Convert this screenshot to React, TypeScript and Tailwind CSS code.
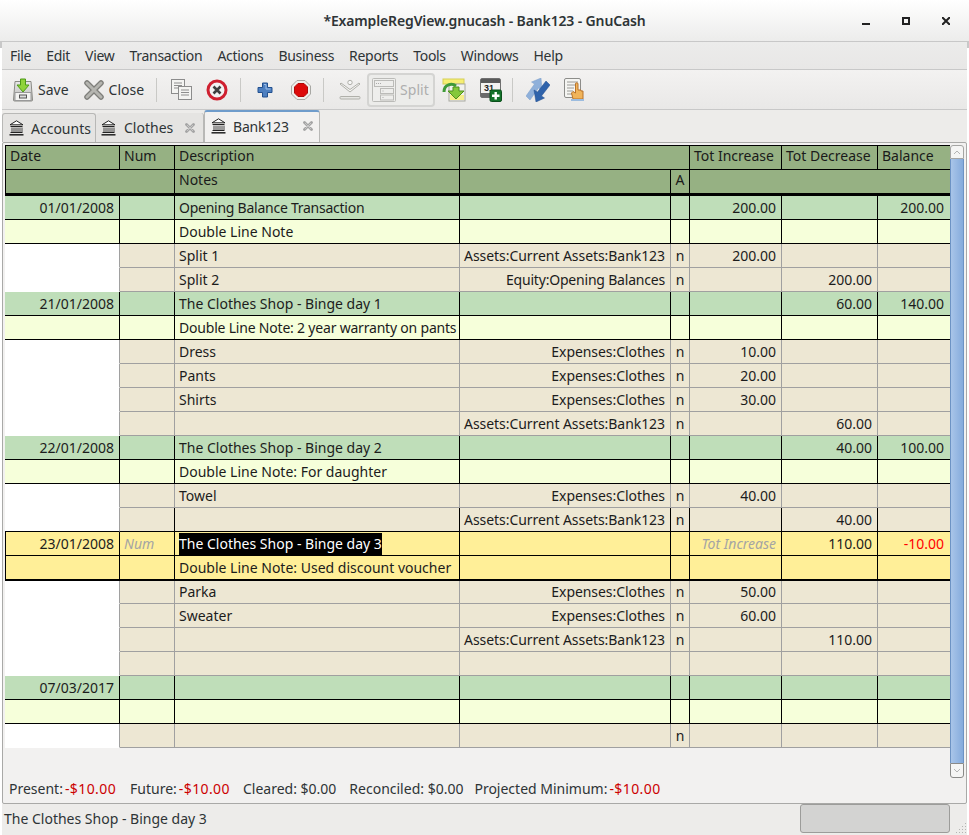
import type { ReactNode } from "react";

const COLS = "grid grid-cols-[115px_55px_285px_211px_19px_92px_96px_72px]";
const FONT = "font-['Noto_Sans',sans-serif]";

type RowData = {
  kind: "txn" | "note" | "split";
  date?: string;
  desc?: string;
  account?: string;
  rec?: string;
  inc?: string;
  dec?: string;
  bal?: string;
  active?: boolean;
  afterActive?: boolean;
  neg?: boolean;
  tight?: string;
};

const rows: RowData[] = [
  { kind: "txn", date: "01/01/2008", desc: "Opening Balance Transaction", inc: "200.00", bal: "200.00", tight: "tracking-[-0.25px]" },
  { kind: "note", desc: "Double Line Note" },
  { kind: "split", desc: "Split 1", account: "Assets:Current Assets:Bank123", rec: "n", inc: "200.00" },
  { kind: "split", desc: "Split 2", account: "Equity:Opening Balances", rec: "n", dec: "200.00" },
  { kind: "txn", date: "21/01/2008", desc: "The Clothes Shop - Binge day 1", dec: "60.00", bal: "140.00" },
  { kind: "note", desc: "Double Line Note: 2 year warranty on pants", tight: "tracking-[-0.2px]" },
  { kind: "split", desc: "Dress", account: "Expenses:Clothes", rec: "n", inc: "10.00" },
  { kind: "split", desc: "Pants", account: "Expenses:Clothes", rec: "n", inc: "20.00" },
  { kind: "split", desc: "Shirts", account: "Expenses:Clothes", rec: "n", inc: "30.00" },
  { kind: "split", account: "Assets:Current Assets:Bank123", rec: "n", dec: "60.00" },
  { kind: "txn", date: "22/01/2008", desc: "The Clothes Shop - Binge day 2", dec: "40.00", bal: "100.00" },
  { kind: "note", desc: "Double Line Note: For daughter" },
  { kind: "split", desc: "Towel", account: "Expenses:Clothes", rec: "n", inc: "40.00" },
  { kind: "split", account: "Assets:Current Assets:Bank123", rec: "n", dec: "40.00" },
  { kind: "txn", active: true, date: "23/01/2008", desc: "The Clothes Shop - Binge day 3", dec: "110.00", bal: "-10.00", neg: true },
  { kind: "note", active: true, desc: "Double Line Note: Used discount voucher" },
  { kind: "split", afterActive: true, desc: "Parka", account: "Expenses:Clothes", rec: "n", inc: "50.00" },
  { kind: "split", desc: "Sweater", account: "Expenses:Clothes", rec: "n", inc: "60.00" },
  { kind: "split", account: "Assets:Current Assets:Bank123", rec: "n", dec: "110.00" },
  { kind: "split" },
  { kind: "txn", date: "07/03/2017" },
  { kind: "note" },
  { kind: "split", rec: "n" },
];

const Cell = ({
  className,
  leading = "leading-[23px]",
  children,
}: {
  className?: string;
  leading?: string;
  children?: ReactNode;
}) => (
  <div className={`overflow-hidden whitespace-nowrap border-r ${leading} ${className ?? ""}`}>
    {children}
  </div>
);

const RegisterRow = ({ row, nextBlack }: { row: RowData; nextBlack: boolean }) => {
  const isSplit = row.kind === "split";
  const bg = row.active
    ? "bg-[#ffef98]"
    : row.kind === "txn"
      ? "bg-[#bfdeb9]"
      : row.kind === "note"
        ? "bg-[#f6ffda]"
        : "bg-[#ede7d3]";
  const line = isSplit && !nextBlack ? "border-[#a0a0a0]" : "border-black";
  const bottom = row.active && row.kind === "note" ? "border-b-2" : "border-b";
  const base = `${bg} ${line} ${bottom}`;
  const height =
    row.active && row.kind === "note"
      ? "h-[25px]"
      : row.afterActive
        ? "h-[23px]"
        : "h-[24px]";
  const leading = row.afterActive ? "leading-[21px]" : "leading-[23px]";

  return (
    <div className={`${COLS} ${height}`}>
      {isSplit ? (
        <Cell className={`bg-white border-[#a0a0a0] border-b ${nextBlack ? "border-b-black" : "border-b-white"}`} />
      ) : (
        <Cell className={`${base} pr-[5px] text-right ${row.active ? "border-l border-l-black" : ""}`}>{row.date}</Cell>
      )}
      <Cell className={`${base} pl-[4px]`}>
        {row.active && row.kind === "txn" && <span className="italic text-[#a4a4a4]">Num</span>}
      </Cell>
      <Cell leading={leading} className={`${base} pl-[4px] ${row.tight ?? ""}`}>
        {row.active && row.kind === "txn" ? (
          <span className="inline-block h-[22px] bg-black leading-[22px] text-white">{row.desc}</span>
        ) : (
          row.desc
        )}
      </Cell>
      <Cell leading={leading} className={`${base} pr-[5px] text-right ${row.desc === "Split 2" ? "tracking-[-0.2px]" : "tracking-[-0.06px]"}`}>{row.account}</Cell>
      <Cell leading={leading} className={`${base} text-center`}>{row.rec}</Cell>
      <Cell leading={leading} className={`${base} pr-[5px] text-right`}>
        {row.active && row.kind === "txn" ? <span className="italic text-[#a4a4a4]">Tot Increase</span> : row.inc}
      </Cell>
      <Cell leading={leading} className={`${base} pr-[5px] text-right`}>{row.dec}</Cell>
      <Cell leading={leading} className={`${base} border-r-0 pr-[6px] text-right ${row.neg ? "text-[#ff0000]" : ""}`}>{row.bal}</Cell>
    </div>
  );
};

const BankIcon = () => (
  <svg width="15" height="16" viewBox="0 0 15 16" fill="none" stroke="#222" strokeWidth="1">
    <path d="M7.500 .8 L14 4.800 H1 Z" fill="#fff" />
    <path d="M1.500 6.500h12" />
    <path d="M3 7.500v4.500M5 7.500v4.500M7 7.500v4.500M9 7.500v4.500M11 7.500v4.500M13 7.500v4.500" stroke="#444" />
    <path d="M1.500 12.500h12" />
    <path d="M.5 14.800h14" strokeWidth="1.500" />
  </svg>
);

const TabClose = () => (
  <svg width="10" height="10" viewBox="0 0 10 10">
    <path d="M1.500 1.500l7 7M8.500 1.500l-7 7" stroke="#a4a4a4" strokeWidth="2.800" strokeLinecap="round" />
    <path d="M2 2l6 6M8 2l-6 6" stroke="#cfcfcf" strokeWidth=".8" />
  </svg>
);

const SaveIcon = () => (
  <svg width="20" height="24" viewBox="0 0 20 24">
    <defs>
      <linearGradient id="cab" x1="0" x2="0" y1="0" y2="1">
        <stop offset="0" stopColor="#e8e8e8" />
        <stop offset="1" stopColor="#b9b9b6" />
      </linearGradient>
    </defs>
    <path d="M2 3.500h16l1.500 18.500a1 1 0 0 1-1 1H1.500a1 1 0 0 1-1-1Z" fill="url(#cab)" stroke="#8a8a85" />
    <rect x="2" y="14.500" width="16" height="8" fill="#f4f4f2" stroke="#999" />
    <rect x="6.500" y="17" width="7" height="3" fill="#ddd" stroke="#555" />
    <path d="M7.500 1h5v6h3.500l-6 7-6-7h3.500Z" fill="#8fd33a" stroke="#4d9a17" />
  </svg>
);

const CloseIcon = () => (
  <svg width="20" height="20" viewBox="0 0 20 20">
    <path d="M3 3l14 14M17 3L3 17" stroke="#7e7e7a" strokeWidth="5.500" strokeLinecap="round" />
    <path d="M3 3l14 14M17 3L3 17" stroke="#b5b5b0" strokeWidth="3" strokeLinecap="round" />
  </svg>
);

const DupIcon = () => (
  <svg width="21" height="21" viewBox="0 0 21 21" fill="#f4f4f2" stroke="#8c8c8c">
    <rect x="0.500" y="0.500" width="13" height="14" />
    <rect x="7.500" y="7.500" width="13" height="13" />
    <path d="M3 4h8M3 6.500h8M3 9h4M10 11h8M10 13.500h8M10 16h8" stroke="#8e8e8e" />
  </svg>
);

const DeleteIcon = () => (
  <svg width="22" height="22" viewBox="0 0 22 22">
    <circle cx="11" cy="11" r="9" fill="#f2f2f2" stroke="#cf2030" strokeWidth="3" />
    <path d="M7.500 7.500l7 7M14.500 7.500l-7 7" stroke="#3f3f3f" strokeWidth="2.600" />
  </svg>
);

const PlusIcon = () => (
  <svg width="16" height="16" viewBox="0 0 16 16">
    <path d="M5.500 1h5v4.500H15v5h-4.500V15h-5v-4.500H1v-5h4.500Z" fill="#4d7fc0" stroke="#22508f" />
    <path d="M7 2.500h2v4.500h4.500" fill="none" stroke="#9dbfe8" />
  </svg>
);

const RecordIcon = () => (
  <svg width="20" height="20" viewBox="0 0 20 20">
    <path d="M6 .5h8L19.500 6v8L14 19.500H6L.5 14V6Z" fill="#f0efec" stroke="#a8a8a4" />
    <path d="M7 3.500h6L16.500 7v6L13 16.500H7L3.500 13V7Z" fill="#dd0a0a" stroke="#b00808" />
  </svg>
);

const BlankIcon = () => (
  <svg width="22" height="22" viewBox="0 0 22 22" fill="none" stroke="#b0b0aa">
    <circle cx="11" cy="3.500" r="2.200" fill="#f6f6f6" />
    <path d="M1 5l10 8 10-8-1-1-9 6.500L2 4Z" fill="#f4f4f2" />
    <rect x="1" y="17.500" width="20" height="2.500" rx="1" fill="#e6e6e3" />
  </svg>
);

const SplitIcon = () => (
  <svg width="24" height="24" viewBox="0 0 24 24" fill="#eeeeec" stroke="#bbbbb8">
    <rect x="0.500" y="0.500" width="23" height="23" rx="1" />
    <rect x="2.500" y="2.500" width="19" height="6" />
    <rect x="8.500" y="10.500" width="13" height="5" />
    <rect x="8.500" y="17" width="13" height="5" />
    <path d="M4 5.500h6M10.500 13h1.500M10.500 19.500h1.500" stroke="#aaa" strokeDasharray="1 1" />
  </svg>
);

const JumpIcon = () => (
  <svg width="24" height="24" viewBox="0 0 24 24">
    <rect x="1" y="1" width="21" height="5" fill="#f6ef72" stroke="#d6cf56" />
    <rect x="7" y="6" width="16" height="17" fill="#f2f2ee" stroke="#a8a8a0" />
    <rect x="8" y="17" width="14" height="5" fill="#f6ef8a" />
    <path d="M2 14C2 6 10 5 14 8" fill="none" stroke="#3e9a38" strokeWidth="3" />
    <path d="M11 9h6v4h5l-8 8-8-8h5Z" fill="#85c83a" stroke="#4f8f1d" />
  </svg>
);

const ScheduleIcon = () => (
  <svg width="22" height="24" viewBox="0 0 22 24">
    <rect x="0.500" y="0.500" width="20" height="19" rx="1.500" fill="#f3f3f1" stroke="#707070" />
    <rect x="1" y="1" width="19" height="4" fill="#5a5a5a" />
    <rect x="1" y="15" width="19" height="4" fill="#6a6a6a" />
    <text x="4" y="13" fontSize="9" fontWeight="700" fill="#222" fontFamily="Liberation Sans, sans-serif">31</text>
    <rect x="10" y="12" width="11.500" height="11.500" rx="1.500" fill="#13722a" stroke="#0b4f1b" />
    <path d="M15.700 14v7.500M12 17.800h7.500" stroke="#fff" strokeWidth="2.400" />
  </svg>
);

const TransferIcon = () => (
  <svg width="24" height="24" viewBox="0 0 24 24">
    <path d="M15 0L16 12 12.500 10 4 22 0 18 8.500 6 5.500 4Z" fill="#8fb0da" stroke="#7c9ecb" strokeWidth=".5" />
    <path d="M10 24L8 12 11.500 14 20 3 24 7 15.500 18 18.500 20Z" fill="#2f63ab" stroke="#204c8c" strokeWidth=".5" />
  </svg>
);

const HandIcon = () => (
  <svg width="21" height="24" viewBox="0 0 21 24">
    <rect x="0.500" y="0.500" width="16" height="19" rx="1.500" fill="#f5f5f2" stroke="#8d8d8a" />
    <path d="M3 4h11M3 7h11M3 10h7M3 13h6M3 16h6" stroke="#9a9a96" />
    <path d="M9 21h10v-8l-2 0v-1h-3V6a1.200 1.200 0 0 0-2.500 0v9l-2.500-1.500-1.500 1.500Z" fill="#f0b45a" stroke="#b9732a" />
    <rect x="7" y="21" width="13" height="2" fill="#9cbcdf" />
  </svg>
);

const Sep = ({ className }: { className: string }) => (
  <div className={`h-[24px] w-px bg-[#c9c9c6] ${className}`} />
);

const Toolbar = () => (
  <div className="flex h-[40px] items-center border-b border-[#c8c8c8] bg-gradient-to-b from-[#f3f2f1] to-[#e9e8e7] pl-[11px] text-[#2e3436]">
    <SaveIcon />
    <span className="ml-[5px]">Save</span>
    <span className="ml-[15px] flex"><CloseIcon /></span>
    <span className="ml-[5px]">Close</span>
    <Sep className="ml-[12px]" />
    <span className="ml-[14px] flex"><DupIcon /></span>
    <span className="ml-[14px] flex"><DeleteIcon /></span>
    <Sep className="ml-[12px]" />
    <span className="ml-[16px] flex"><PlusIcon /></span>
    <span className="ml-[18px] flex"><RecordIcon /></span>
    <Sep className="ml-[12px]" />
    <span className="ml-[15px] flex"><BlankIcon /></span>
    <div className="ml-[6px] flex h-[34px] w-[68px] items-center gap-[4px] rounded-[4px] border-2 border-[#d4d4d2] bg-[#ececea] pl-[3px] text-[#aeaeae]">
      <SplitIcon />
      <span>Split</span>
    </div>
    <span className="ml-[7px] flex"><JumpIcon /></span>
    <span className="ml-[14px] flex"><ScheduleIcon /></span>
    <Sep className="ml-[10px]" />
    <span className="ml-[13px] flex"><TransferIcon /></span>
    <span className="ml-[14px] flex"><HandIcon /></span>
  </div>
);

const Tabs = () => (
  <div className="flex h-[32px] items-end bg-[#edecea] text-[#2e3436]">
    <div className="flex h-[29px] w-[94px] items-center gap-[7px] rounded-t-[3px] border border-b-0 border-[#b8b8b6] bg-[#e5e4e2] pl-[6px]">
      <BankIcon />
      <span>Accounts</span>
    </div>
    <div className="flex h-[29px] w-[108px] items-center rounded-t-[3px] border-r border-[#b8b8b6] bg-[#e5e4e2] pl-[5px]">
      <BankIcon />
      <span className="ml-[8px]">Clothes</span>
      <span className="ml-[12px] flex"><TabClose /></span>
    </div>
    <div className="flex h-[32px] w-[116px] items-center rounded-t-[3px] border border-b-0 border-[#b8b8b6] border-t-2 border-t-[#6f9ccb] bg-[#f2f1f0] pb-[2px] pl-[6px]">
      <BankIcon />
      <span className="ml-[7px] tracking-[-0.2px]">Bank123</span>
      <span className="ml-[14px] flex"><TabClose /></span>
    </div>
  </div>
);

const HeaderRows = () => {
  const head = "leading-[20px] border-b border-black";
  const deep = "leading-[20px] border-b-[3px] border-black";
  return (
    <div className="border-t border-black bg-[#96b183] text-[#1a1a1a]">
      <div className={`${COLS} h-[24px]`}>
        <Cell leading={head} className="border-l pl-[4px]">Date</Cell>
        <Cell leading={head} className="pl-[4px]">Num</Cell>
        <Cell leading={head} className="pl-[4px]">Description</Cell>
        <Cell leading={head} className="col-span-2" />
        <Cell leading={head} className="pl-[4px]">Tot Increase</Cell>
        <Cell leading={head} className="pl-[4px]">Tot Decrease</Cell>
        <Cell leading={head} className="border-r-0 pl-[4px]">Balance</Cell>
      </div>
      <div className={`${COLS} h-[26px]`}>
        <Cell leading={deep} className="col-span-2 border-l" />
        <Cell leading={deep} className="pl-[4px]">Notes</Cell>
        <Cell leading={deep} />
        <Cell leading={deep} className="text-center">A</Cell>
        <Cell leading={deep} className="col-span-3 border-r-0" />
      </div>
    </div>
  );
};

const Scrollbar = () => (
  <div className="flex w-[14px] flex-col">
    <div className="flex h-[14px] items-center justify-center rounded-t-[3px] border border-[#a5a5a3] bg-[#f5f5f4]">
      <svg width="8" height="5" viewBox="0 0 8 5" fill="none" stroke="#b4b4b4"><path d="M1 4l3-3 3 3" /></svg>
    </div>
    <div className="flex-1 border-x border-[#6d93c4] bg-gradient-to-r from-[#a9c5e9] to-[#85abdc]" />
    <div className="flex h-[15px] items-center justify-center rounded-b-[3px] border border-[#8a8a88] bg-[#f5f5f4]">
      <svg width="8" height="5" viewBox="0 0 8 5" fill="none" stroke="#b4b4b4"><path d="M1 1l3 3 3-3" /></svg>
    </div>
  </div>
);

const Neg = ({ children }: { children: ReactNode }) => (
  <span className="ml-[2px] tracking-[0.4px] text-[#cc0000]">{children}</span>
);

const Grip = () => (
  <svg width="12" height="12" viewBox="0 0 12 12" fill="#b4b4b2" className="mb-[1px] ml-[5px] self-end">
    <rect x="10" y="1" width="1" height="1" />
    <rect x="7" y="4" width="1" height="1" />
    <rect x="10" y="4" width="1" height="1" />
    <rect x="4" y="7" width="1" height="1" />
    <rect x="7" y="7" width="1" height="1" />
    <rect x="10" y="7" width="1" height="1" />
    <rect x="1" y="10" width="1" height="1" />
    <rect x="4" y="10" width="1" height="1" />
    <rect x="7" y="10" width="1" height="1" />
    <rect x="10" y="10" width="1" height="1" />
  </svg>
);

export default function App() {
  return (
    <div className={`relative h-[835px] w-[969px] overflow-hidden bg-white text-[14px] text-[#1c1c1c] ${FONT}`}>
      <span className="absolute left-0 top-[42px] h-[6px] w-[2px] bg-[#c8c8c8]" />
      <span className="absolute right-0 top-[42px] h-[6px] w-[2px] bg-[#c8c8c8]" />
      <div className="relative flex h-[42px] items-center justify-center border-b border-[#c8c8c8] bg-gradient-to-b from-white to-[#ececeb] font-semibold tracking-[-0.14px] text-[#2e3436]">
        *ExampleRegView.gnucash - Bank123 - GnuCash
        <div className="absolute right-[19px] top-[17px] flex items-start gap-[32px]">
          <span className="mt-[6px] h-[2px] w-[8px] bg-[#222]" />
          <span className="h-[8px] w-[8px] border-2 border-[#222]" />
          <svg width="8" height="8" viewBox="0 0 8 8" stroke="#222" strokeWidth="2"><path d="M0 0l8 8M8 0L0 8" /></svg>
        </div>
      </div>
      <div className="mx-[2px] flex h-[793px] flex-col bg-[#f0efee]">
        <div className="flex h-[28px] items-center gap-[15px] border-b border-[#c8c8c8] bg-gradient-to-b from-[#ececeb] to-[#e8e7e6] pl-[8px] tracking-[-0.3px] text-[#2e3436]">
          {["File", "Edit", "View", "Transaction", "Actions", "Business", "Reports", "Tools", "Windows", "Help"].map((m) => (
            <span key={m}>{m}</span>
          ))}
        </div>
        <Toolbar />
        <Tabs />
        <div className="flex h-[662px] w-[965px] flex-col rounded-[2px] border border-[#a9a9a7] bg-[#f2f1f0] pl-[2px] pt-[2px]">
          <div className="flex h-[636px]">
            <div className="h-[603px] w-[945px] bg-[#f2f1f0]">
              <HeaderRows />
              {rows.map((row, i) => (
                <RegisterRow
                  key={i}
                  row={row}
                  nextBlack={rows[i + 1]?.active === true && !row.active}
                />
              ))}
            </div>
            <Scrollbar />
          </div>
          <div className="flex flex-1 items-center gap-[14px] pb-[4px] pl-[4px] text-[#2e3436]">
            <span>Present:<Neg>-$10.00</Neg></span>
            <span>Future:<Neg>-$10.00</Neg></span>
            <span className="-ml-px">Cleared: $0.00</span>
            <span className="-ml-px">Reconciled: $0.00</span>
            <span className="-ml-[3px]">Projected Minimum:<Neg>-$10.00</Neg></span>
          </div>
        </div>
        <div className="flex h-[31px] items-start bg-[#edecea] pl-[2px] text-[#2e3436]">
          <span className="flex-1 pt-[4px]">The Clothes Shop - Binge day 3</span>
          <div className="h-[29px] w-[150px] rounded-[3px] border border-[#9c9c9a] bg-[#d3d3d2]" />
          <Grip />
        </div>
      </div>
    </div>
  );
}
